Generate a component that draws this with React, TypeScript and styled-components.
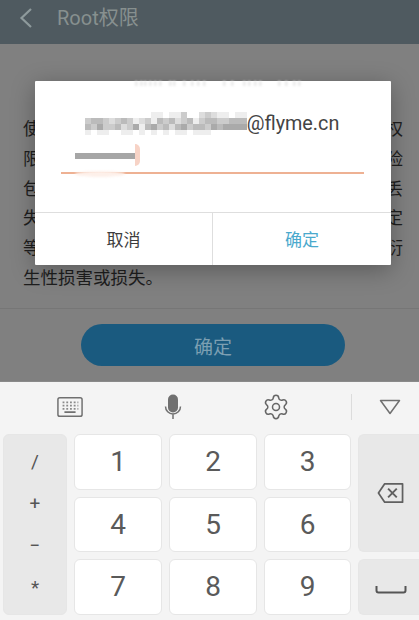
import React from "react";
import styled, { createGlobalStyle } from "styled-components";
import { Settings } from "lucide-react";

const FONT = `Roboto, "Noto Sans CJK SC", "Noto Sans", sans-serif`;

// only the ends of these lines stick out from behind the dialog
const BODY_LINES = [
    ["使", "权"],
    ["限", "险"],
    ["包", "丢"],
    ["失", "定"],
    ["等", "衍"],
];

const MOSAIC = [
    "fffffffffffeefeecffdcdeefee",
    "cbbcdcbcedcebcbdcbecbbccbbb",
    "bcaccbdcaebacbdbacbbcabaaaa",
    "efeeffeefefefefeefeeeffffff",
];

const GHOST_MARKS = [0, 5, 9, 14, 19, 24, 34, 38, 48, 56, 62, 68, 88, 96, 108, 113, 119, 124, 143, 150, 158, 163];

const LEFT_SYMBOLS = ["/", "+", "−", "*"];
const DIGITS = ["1", "2", "3", "4", "5", "6", "7", "8", "9"];

const App = () => {
    return (
        <Screen>
            <GlobalStyle />
            <Page>
                <Header>
                    <BackIcon width="14" height="22" viewBox="0 0 14 22" fill="none">
                        <path d="M12 2L2.500 11L12 20" stroke="#8e9a9c" strokeWidth="2.200" />
                    </BackIcon>
                    <HeaderTitle>Root权限</HeaderTitle>
                </Header>
                <Content>
                    {BODY_LINES.map(([start, end]) => (
                        <BodyLine key={start}>
                            <span>{start}</span>
                            <span>{end}</span>
                        </BodyLine>
                    ))}
                    <div>生性损害或损失。</div>
                </Content>
                <Footer>
                    <PrimaryButton>确定</PrimaryButton>
                </Footer>
                <Dialog>
                    <GhostTitle width="168" height="6" viewBox="0 0 168 6">
                        {GHOST_MARKS.map((x) => (
                            <rect key={x} x={x} y="0" width="2.500" height="5" fill="#eaeaea" />
                        ))}
                    </GhostTitle>
                    <DialogBody>
                        <AccountRow>
                            <Mosaic width="162" height="23" viewBox="0 0 162 23">
                                {MOSAIC.map((row, y) =>
                                    row.split("").map((c, x) => (
                                        <rect
                                            key={`${x}-${y}`}
                                            x={x * 6}
                                            y={y * 6}
                                            width="6"
                                            height="6"
                                            fill={`#${c}${c}${c}`}
                                        />
                                    ))
                                )}
                            </Mosaic>
                            <span>@flyme.cn</span>
                        </AccountRow>
                        <InputRow>
                            <InputMask />
                            <Caret />
                            <InputSmudge />
                        </InputRow>
                    </DialogBody>
                    <DialogActions>
                        <DialogAction>取消</DialogAction>
                        <DialogAction $accent>确定</DialogAction>
                    </DialogActions>
                </Dialog>
            </Page>
            <Keyboard>
                <Toolbar>
                    <ToolSlot $x={70}>
                        <svg width="26" height="21" viewBox="0 0 28 22" fill="none">
                            <rect x="1" y="1" width="26" height="20" rx="2" stroke="#707070" strokeWidth="1.600" />
                            <path
                                d="M6 6h2M10 6h2M14 6h2M18 6h2M22 6h1M6 9.500h2M10 9.500h2M14 9.500h2M18 9.500h2M22 9.500h1M6 13h2M10 13h2M14 13h2M18 13h2M22 13h1"
                                stroke="#8a8a8a"
                                strokeWidth="1.700"
                            />
                            <path d="M8 16.500h12" stroke="#707070" strokeWidth="2" />
                        </svg>
                    </ToolSlot>
                    <ToolSlot $x={173}>
                        <svg width="18" height="26" viewBox="0 0 18 26" fill="none">
                            <rect x="4" y="0.500" width="10" height="18" rx="5" fill="#707070" />
                            <path d="M1.500 12.500a7.500 7.500 0 0 0 15 0M9 20v5" stroke="#707070" strokeWidth="1.500" />
                        </svg>
                    </ToolSlot>
                    <ToolSlot $x={276}>
                        <Settings size={28} strokeWidth={1.300} color="#666" />
                    </ToolSlot>
                    <ToolDivider />
                    <ToolSlot $x={390}>
                        <svg width="22" height="16" viewBox="0 0 22 16" fill="none">
                            <path d="M1.500 1.500h19L11 14.500z" stroke="#707070" strokeWidth="1.500" strokeLinejoin="round" />
                        </svg>
                    </ToolSlot>
                </Toolbar>
                <KeyGrid>
                    <SymbolKey>
                        {LEFT_SYMBOLS.map((s) => (
                            <SymbolGlyph key={s}>{s}</SymbolGlyph>
                        ))}
                    </SymbolKey>
                    {DIGITS.map((d) => (
                        <DigitKey key={d}>{d}</DigitKey>
                    ))}
                    <BackspaceKey>
                        <svg width="27" height="22" viewBox="0 0 28 22" fill="none">
                            <path
                                d="M8 1.500h18.500v19H8L1.500 11z"
                                stroke="#606060"
                                strokeWidth="1.800"
                                strokeLinejoin="round"
                            />
                            <path d="M11.500 6.500l9 9M20.500 6.500l-9 9" stroke="#606060" strokeWidth="2" />
                        </svg>
                    </BackspaceKey>
                    <SpaceKey>
                        <svg width="32" height="10" viewBox="0 0 32 10" fill="none">
                            <path d="M1.500 1v4.500a2 2 0 0 0 2 2h25a2 2 0 0 0 2-2V1" stroke="#555" strokeWidth="2" />
                        </svg>
                    </SpaceKey>
                </KeyGrid>
            </Keyboard>
        </Screen>
    );
};

export default App;

const GlobalStyle = createGlobalStyle`
    html, body {
        margin: 0;
        padding: 0;
        background: #f4f4f4;
    }
    * {
        box-sizing: border-box;
    }
`;

const Screen = styled.div`
    width: 419px;
    height: 620px;
    overflow: hidden;
    display: flex;
    flex-direction: column;
    font-family: ${FONT};
`;

const Page = styled.div`
    position: relative;
    height: 381px;
    display: flex;
    flex-direction: column;
    background: #808080;
`;

const Header = styled.div`
    height: 44px;
    flex-shrink: 0;
    display: flex;
    align-items: center;
    padding: 0 0 8px 19px;
    background: #4f5a60;
`;

const BackIcon = styled.svg`
    flex-shrink: 0;
`;

const HeaderTitle = styled.div`
    margin: 0 0 3px 24px;
    font-size: 20px;
    color: #87908f;
`;

const Content = styled.div`
    height: 265px;
    flex-shrink: 0;
    padding: 71px 16px 0 23px;
    border-bottom: 1px solid #767676;
    color: #1e1e1e;
    font-size: 17.500px;
    line-height: 29.800px;
`;

const BodyLine = styled.div`
    display: flex;
    justify-content: space-between;
`;

const Footer = styled.div`
    flex: 1;
    display: flex;
    justify-content: center;
    padding: 15px 0 0 7px;
`;

const PrimaryButton = styled.div`
    width: 264px;
    height: 42px;
    border-radius: 21px;
    background: #1a5a7f;
    color: #7c9fb2;
    font-size: 19px;
    display: flex;
    align-items: center;
    justify-content: center;
`;

const Dialog = styled.div`
    position: absolute;
    left: 35px;
    top: 81px;
    width: 356px;
    height: 184px;
    display: flex;
    flex-direction: column;
    background: #fff;
    border-radius: 1px;
    box-shadow: 0 5px 24px rgba(0, 0, 0, 0.3);
`;

const GhostTitle = styled.svg`
    position: absolute;
    left: 100px;
    top: 0;
    filter: blur(0.8px);
`;

const DialogBody = styled.div`
    height: 132px;
    padding: 29px 27px 0 26px;
    border-bottom: 1px solid #dedede;
`;

const AccountRow = styled.div`
    height: 26px;
    display: flex;
    align-items: center;
    justify-content: center;
    margin-left: -1px;
    color: #444;
    font-size: 19.800px;
    white-space: nowrap;
`;

const Mosaic = styled.svg`
    flex-shrink: 0;
    filter: blur(0.5px);
`;

const InputRow = styled.div`
    height: 28px;
    margin-top: 10px;
    position: relative;
    border-bottom: 2px solid #eeb193;
`;

const InputMask = styled.div`
    position: absolute;
    left: 14px;
    top: 7px;
    width: 60px;
    height: 6px;
    background: #a6a6a6;
    filter: blur(0.4px);
`;

const Caret = styled.div`
    position: absolute;
    left: 74px;
    top: -2px;
    width: 5px;
    height: 22px;
    border-radius: 0 5px 5px 0;
    background: #f7d3c6;
`;

const InputSmudge = styled.div`
    position: absolute;
    left: 14px;
    bottom: -5px;
    width: 50px;
    height: 6px;
    border-radius: 50%;
    background: #fdf0ea;
    filter: blur(1px);
`;

const DialogActions = styled.div`
    flex: 1;
    display: flex;
`;

const DialogAction = styled.div<{ $accent?: boolean }>`
    display: flex;
    align-items: center;
    justify-content: center;
    padding-bottom: 1px;
    font-size: 17px;
    flex: ${({ $accent }) => ($accent ? "1" : "0 0 177px")};
    color: ${({ $accent }) => ($accent ? "#4aa9cd" : "#3c3c3c")};
    & + & {
        border-left: 1px solid #dedede;
    }
`;

const Keyboard = styled.div`
    flex: 1;
    display: flex;
    flex-direction: column;
    background: #f4f4f4;
    border-top: 1px solid #8a8a8a;
`;

const Toolbar = styled.div`
    position: relative;
    height: 52px;
    flex-shrink: 0;
`;

const ToolSlot = styled.div<{ $x: number }>`
    position: absolute;
    left: ${({ $x }) => $x}px;
    top: 25px;
    transform: translate(-50%, -50%);
    display: flex;
`;

const ToolDivider = styled.div`
    position: absolute;
    left: 351px;
    top: 12px;
    width: 1px;
    height: 26px;
    background: #dcdcdc;
`;

const KeyGrid = styled.div`
    display: grid;
    grid-template-columns: 65px 88px 88px 87px 61px;
    grid-template-rows: 56px 55px 56px;
    column-gap: 7px;
    row-gap: 7px;
    margin-left: 2px;
`;

const BaseKey = styled.div`
    display: flex;
    align-items: center;
    justify-content: center;
    border-radius: 6px;
    border: 1px solid #e6e6e6;
`;

const SymbolKey = styled(BaseKey)`
    grid-row: 1 / span 3;
    flex-direction: column;
    justify-content: flex-start;
    padding-top: 6px;
    margin-left: 1px;
    background: #e8e8e8;
    color: #555;
    font-size: 19px;
`;

const SymbolGlyph = styled.span`
    height: 42px;
    line-height: 42px;
`;

const DigitKey = styled(BaseKey)`
    padding-bottom: 1px;
    background: #fff;
    color: #5a5a5a;
    font-size: 28px;
`;

const BackspaceKey = styled(BaseKey)`
    grid-column: 5;
    grid-row: 1 / span 2;
    padding-left: 3px;
    background: #e8e8e8;
    border-radius: 6px 0 0 6px;
    border-right: 0;
`;

const SpaceKey = styled(BaseKey)`
    grid-column: 5;
    grid-row: 3;
    padding: 6px 0 0 3px;
    background: #e8e8e8;
    border-radius: 6px 0 0 6px;
    border-right: 0;
`;
